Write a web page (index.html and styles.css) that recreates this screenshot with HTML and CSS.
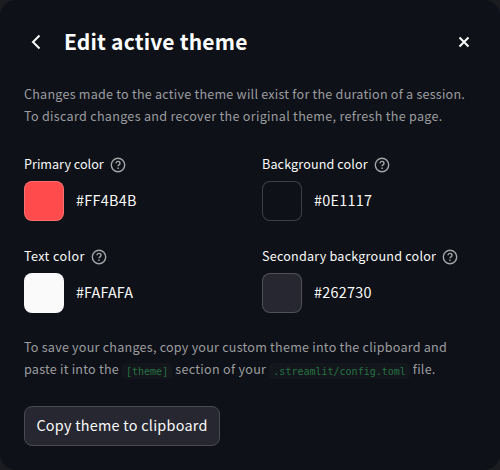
FILE: index.html
```html
<!DOCTYPE html>
<html lang="en">
<head>
<meta charset="utf-8">
<title>Edit active theme</title>
<link rel="stylesheet" href="styles.css">
</head>
<body>
<svg class="defs" width="0" height="0"><symbol id="help" viewBox="0 0 16 16"><circle cx="8" cy="8" r="6.7"/><path d="M6 6.3a2 2 0 0 1 4 .2c0 1.4-2 1.3-2 2.8M8 10.6v1.3"/></symbol></svg>
<main class="dialog">
  <header class="header">
    <button class="icon-button" aria-label="Back"><svg width="24" height="24" viewBox="0 0 24 24"><path class="back" d="M15.5 5.5 9 12l6.5 6.5"/></svg></button>
    <h1 class="title">Edit active theme</h1>
    <button class="icon-button close" aria-label="Close"><svg width="16" height="16" viewBox="0 0 16 16"><path class="cross" d="m3.5 3.5 9 9m0-9-9 9"/></svg></button>
  </header>
  <p class="caption">Changes made to the active theme will exist for the duration of a session.<br><span class="wide">To discard changes and recover the original theme, refresh the page.</span></p>
  <section class="colors">
    <div class="field"><div class="label"><span class="snug">Primary color</span><svg class="help"><use href="#help"/></svg></div><div class="picker"><span class="swatch primary"></span><span class="hex">#FF4B4B</span></div></div>
    <div class="field"><div class="label"><span class="even">Background color</span><svg class="help"><use href="#help"/></svg></div><div class="picker"><span class="swatch background"></span><span class="hex">#0E1117</span></div></div>
    <div class="field"><div class="label"><span class="loose">Text color</span><svg class="help"><use href="#help"/></svg></div><div class="picker"><span class="swatch text"></span><span class="hex tight">#FAFAFA</span></div></div>
    <div class="field"><div class="label"><span>Secondary background color</span><svg class="help"><use href="#help"/></svg></div><div class="picker"><span class="swatch secondary"></span><span class="hex">#262730</span></div></div>
  </section>
  <p class="caption save">To save your changes, copy your custom theme into the clipboard and<br>paste it into the <code>[theme]</code> <span class="wide">section of your</span> <code>.streamlit/config.toml</code> file.</p>
  <button class="copy">Copy theme to clipboard</button>
</main>
</body>
</html>
```
FILE: styles.css
```css
* { box-sizing: border-box; }
body { margin: 0; background: #1b1c1f; color: #fafafa; font-family: "Noto Sans CJK SC", "Noto Sans", sans-serif; }
button { font: inherit; color: inherit; }
.defs { position: absolute; }
.dialog { height: 470px; padding: 24px; background: #0e1117; border-radius: 16px; }
.header { display: flex; align-items: center; height: 36px; }
.icon-button { display: flex; padding: 0; border: 0; background: none; }
.icon-button path { fill: none; stroke: #fafafa; stroke-width: 2; }
.title { margin: -2px 0 0 16px; font-size: 21px; line-height: 36px; font-weight: 600; letter-spacing: .18px; color: #fff; white-space: nowrap; }
.close { margin-left: auto; margin-right: 4px; }
.caption { margin: 23px 0 0; font-size: 12.6px; line-height: 22.4px; letter-spacing: .22px; color: #9c9da0; white-space: nowrap; }
.wide { letter-spacing: .29px; }
.colors { display: grid; grid-template-columns: 1fr 1fr; column-gap: 24px; row-gap: 16px; margin-top: 25px; }
.field { height: 76px; }
.label { display: flex; align-items: center; gap: 6px; height: 21px; font-size: 12.6px; letter-spacing: .21px; white-space: nowrap; }
.snug { letter-spacing: .01px; }
.even { letter-spacing: .12px; }
.loose { letter-spacing: .4px; }
.help { width: 16px; height: 16px; margin-top: 3px; fill: none; stroke: #a3a4a6; stroke-width: 1.4; }
.picker { display: flex; align-items: center; gap: 12px; height: 40px; margin-top: 7px; }
.swatch { width: 40px; height: 40px; border: 1px solid rgba(250,250,250,.2); border-radius: 8px; }
.primary { background: #ff4b4b; }
.background { background: #0e1117; }
.text { background: #fafafa; }
.secondary { background: #262730; }
.hex { margin-top: -2px; font-size: 14.4px; line-height: 24px; letter-spacing: .28px; }
.tight { letter-spacing: .12px; }
.save { margin-top: 15px; }
code { padding: 2.5px 4px; border-radius: 4px; background: #13161b; color: #267344; font: 10px/1 "DejaVu Sans Mono", monospace; letter-spacing: 0; }
.copy { display: block; width: 196px; height: 40px; margin-top: 25px; padding: 0 0 2px; border: 1px solid #494a53; border-radius: 8px; background: #262730; font-size: 14.4px; letter-spacing: .25px; white-space: nowrap; }
```
